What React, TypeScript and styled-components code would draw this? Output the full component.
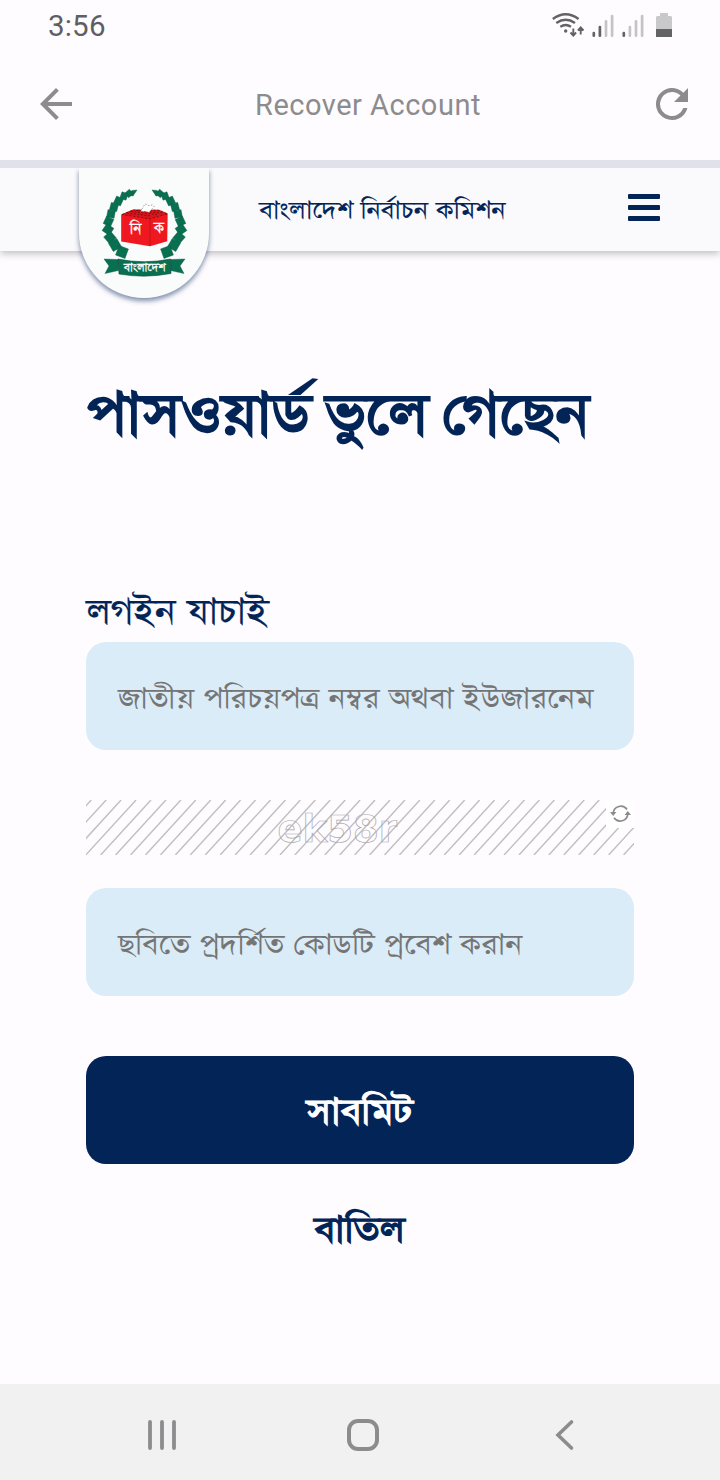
import React from 'react';
import styled, { createGlobalStyle } from 'styled-components';

const navy = '#022457';
const grey = '#8c8c8e';
const bangla = "'FreeSerif', 'Noto Serif Bengali', 'Noto Sans', serif";

const GlobalStyle = createGlobalStyle`
  * { box-sizing: border-box; }
  body { margin: 0; background: #fefcff; }
  svg { display: block; flex: none; }
`;

const Screen = styled.div`
  width: 720px;
  height: 1480px;
  display: flex;
  flex-direction: column;
  background: #fefcff;
  overflow: hidden;
`;

const StatusBar = styled.div`
  height: 50px;
  flex: none;
  padding: 0 47px 0 48px;
  display: flex;
  justify-content: space-between;
  align-items: center;
`;

const Clock = styled.span`
  font: 400 29.5px/36px Roboto, sans-serif;
  letter-spacing: 0.2px;
  color: #5f5f62;
  padding-top: 2px;
`;

const AppBar = styled.header`
  height: 118px;
  flex: none;
  padding: 0 24px 2px 32px;
  border-bottom: 8px solid #e1e1eb;
  display: flex;
  justify-content: space-between;
  align-items: center;
`;

const AppTitle = styled.h1`
  margin: 2px 0 0 8px;
  font: 400 29px/40px Roboto, sans-serif;
  letter-spacing: 0.5px;
  color: ${grey};
`;

// Bengali lettering set slightly expanded.
const Wide = styled.span<{ $by: number; $center?: boolean }>`
  display: inline-block;
  transform: scaleX(${(p) => p.$by});
  transform-origin: ${(p) => (p.$center ? 'center' : 'left')} center;
`;

const SiteHeader = styled.div`
  height: 83px;
  flex: none;
  display: flex;
  align-items: flex-start;
  padding: 0 60px 0 79px;
  background: #fafafc;
  box-shadow: 0 2px 8px rgba(0, 0, 0, 0.28);
  clip-path: inset(0 0 -70px 0);
`;

const Crest = styled.div`
  width: 130px;
  height: 130px;
  flex: none;
  background: #fafbfb;
  border-radius: 0 0 65px 65px;
  box-shadow: 0 3px 5px rgba(2, 36, 87, 0.5);
`;

const SiteName = styled.span`
  flex: 1;
  padding: 26px 0 0 50px;
  font: 400 28.5px/36px ${bangla};
  -webkit-text-stroke: 0.1px ${navy};
  color: ${navy};
  white-space: nowrap;
`;

const MenuIcon = styled.span`
  width: 32px;
  margin-top: 26px;
  display: flex;
  flex-direction: column;
  gap: 6px;
`;

const MenuBar = styled.i`
  height: 5px;
  border-radius: 1px;
  background: ${navy};
`;

const Main = styled.main`
  flex: 1;
  padding: 0 86px;
  display: flex;
  flex-direction: column;
`;

const Heading = styled.h2`
  margin: 116px 0 0;
  height: 100px;
  font: 400 70px/100px ${bangla};
  word-spacing: -4px;
  -webkit-text-stroke: 1.9px ${navy};
  color: ${navy};
  white-space: nowrap;
`;

const Label = styled.label`
  margin-top: 116px;
  height: 59px;
  font: 400 42px/60px ${bangla};
  -webkit-text-stroke: 0.2px ${navy};
  color: ${navy};
  white-space: nowrap;
`;

const Field = styled.div`
  height: 108px;
  flex: none;
  padding: 8px 32px 0;
  border-radius: 20px;
  background: #daecf8;
  display: flex;
  align-items: center;
  font: 400 34.4px/50px ${bangla};
  color: #757575;
  white-space: nowrap;
`;

const Captcha = styled.div`
  margin: 50px 0 33px;
  height: 55px;
  flex: none;
`;

const Submit = styled.button`
  margin-top: 60px;
  height: 108px;
  flex: none;
  padding: 6px 0 0;
  border: 0;
  border-radius: 20px;
  background: ${navy};
  color: #fff;
  font: 400 42px/60px ${bangla};
  -webkit-text-stroke: 1.2px #fff;
`;

const Cancel = styled.a`
  margin: 37px 2px 0 0;
  text-align: center;
  color: ${navy};
  font: 400 42px/60px ${bangla};
  -webkit-text-stroke: 1.2px ${navy};
`;

const NavBar = styled.nav`
  height: 96px;
  flex: none;
  padding: 6px 145px 0 147px;
  display: flex;
  justify-content: space-between;
  align-items: center;
  background: #f1f1f1;
`;

const HomeIcon = styled.svg`
  margin-right: 6px;
`;

// Leaves of one half of the wreath: centre x, centre y, size, rotation.
const leaves = [
  [50, 25.5, 6, 50], [45, 28, 6.5, 20], [39.5, 33, 7.5, 25], [35, 39, 7.5, 15], [32, 46, 7.5, 10],
  [29.5, 53.5, 8, 25], [29, 61.5, 8.5, 35], [31, 69.5, 9, 50], [36, 77, 9.5, 60], [43, 84, 10, 20],
];

const Emblem = () => (
  <svg width="130" height="130" viewBox="0 0 130 130">
    {[false, true].map((flip) => (
      <g key={String(flip)} fill="#087050" stroke="#0a5a44" strokeWidth="0.4" transform={flip ? 'translate(131 0) scale(-1 1)' : undefined}>
        <path d="M48 27l5-4.500 5-.500-4 6z" />
        {leaves.map(([x, y, s, a]) => (
          <rect key={y} x={x - s / 2} y={y - s / 2} width={s} height={s} transform={`rotate(${a} ${x} ${y})`} />
        ))}
        <path d="M25 91l14.500 .500v11l-13.500 3 4-7.500z" />
      </g>
    ))}
    <path d="M39 91q26 5.500 52.500 0l.500 14.500q-26.500 5-52 .500z" fill="#087050" stroke="#0a4a3a" strokeWidth="0.600" />
    <path d="M42.200 46.500L54 41.500l26 .300 8.700 3.700-.500 27.800-17.200 5-28.800-4.800z" fill="#f01820" />
    <path d="M43 46.500l11-4.500 26 .300 8.500 3.500-17.500 5z" fill="#d8161c" stroke="#5a0808" strokeWidth="0.600" strokeDasharray="2.500 1.500" />
    <path d="M48 45l24 3M52 43.500l26 3M57 42.500l26 2.500" stroke="#5a0808" strokeWidth="0.700" strokeDasharray="2 1.500" />
    <path d="M71 50.500v27.500" stroke="#b30f16" strokeWidth="0.700" />
    <path d="M61.500 43.500l4.500-7.500 3.500 1.500 4-.500 1.500 1.500-5 6-3-1z" fill="#fff" stroke="#444" strokeWidth="0.500" strokeDasharray="1.500 1.500" />
    <g fill="#fff" stroke="#fff" strokeWidth="0.300" fontFamily={bangla} textAnchor="middle">
      <text x="56.500" y="67" fontSize="18">নি</text>
      <text x="80" y="66" fontSize="18">ক</text>
      <text x="65.500" y="103.500" fontSize="14">বাংলাদেশ</text>
    </g>
  </svg>
);

const SignalBars = ({ x, strong }: { x: number; strong: number }) => (
  <g strokeWidth="2.700" strokeLinecap="round">
    {[33, 27, 21.300, 16].map((top, i) => (
      <path key={top} d={`M${x + i * 6.1} ${top}V35.700`} stroke={i < strong ? '#636366' : '#c4c3c6'} />
    ))}
  </g>
);

const StatusIcons = () => (
  <svg width="122" height="50" viewBox="551 0 122 50" fill="none">
    <g stroke="#636366">
      <path d="M552.800 19Q565.700 9.500 578.600 19M556.300 23Q565.700 16.500 575 23M560.300 26.700Q565.700 23.300 571 26.700" strokeWidth="2.300" />
      <circle cx="565.700" cy="31" r="1.700" fill="#636366" stroke="none" />
      <path d="M573.300 28.500v7M570.500 32.500l2.800 3 2.800-3M580.700 34.500v-7M577.900 30.500l2.800-3 2.800 3" strokeWidth="1.900" />
    </g>
    <SignalBars x={593.800} strong={2} />
    <SignalBars x={623.800} strong={1} />
    <path d="M660 13h8v3h3l1 1v12h-16V17l1-1h3z" fill="#c9c8cb" />
    <path d="M656 29h16v8h-16z" fill="#636366" />
  </svg>
);

const stripes = Array.from({ length: 41 }, (_, i) => 5.2 + i * 14.94);

const CaptchaImage = () => (
  <svg width="548" height="55" viewBox="0 0 548 55">
    <g stroke="#bfbec2" strokeWidth="1.400">
      {stripes.map((x) => <path key={x} d={`M${x} 0L${x - 50.3} 55`} />)}
    </g>
    <text x="191.500" y="42" fontFamily="'DejaVu Sans', sans-serif" fontWeight="700" fontSize="37" fill="none" stroke="#a9a8aa" strokeWidth="0.700">ek58r</text>
    <path d="M520 0h28v28h-28z" fill="#fff" />
    <g fill="none" stroke="#8b8b8b" strokeWidth="1.700">
      <path d="M527.200 13A7.600 7.600 0 0 1 541 9.500M541.800 14A7.600 7.600 0 0 1 528 17.800" />
      <path d="M524 12h6.400l-3.200 4zM538.600 15h6.400l-3.200-4z" fill="#8b8b8b" stroke="none" />
    </g>
  </svg>
);

export default function App() {
  return (
    <Screen>
      <GlobalStyle />
      <StatusBar>
        <Clock>3:56</Clock>
        <StatusIcons />
      </StatusBar>
      <AppBar>
        <svg width="48" height="48" viewBox="0 0 24 24" fill={grey}>
          <path d="M20 11H7.830l5.590-5.590L12 4l-8 8 8 8 1.410-1.410L7.830 13H20z" />
        </svg>
        <AppTitle>Recover Account</AppTitle>
        <svg width="48" height="48" viewBox="0 0 24 24" fill={grey}>
          <path d="M17.650 6.350A8 8 0 1 0 19.730 14h-2.080A6 6 0 1 1 12 6c1.660 0 3.140.690 4.220 1.780L13 11h7V4z" />
        </svg>
      </AppBar>
      <SiteHeader>
        <Crest><Emblem /></Crest>
        <SiteName><Wide $by={1.107}>বাংলাদেশ নির্বাচন কমিশন</Wide></SiteName>
        <MenuIcon><MenuBar /><MenuBar /><MenuBar /></MenuIcon>
      </SiteHeader>
      <Main>
        <Heading><Wide $by={1.073}>পাসওয়ার্ড ভুলে গেছেন</Wide></Heading>
        <Label><Wide $by={1.095}>লগইন যাচাই</Wide></Label>
        <Field><Wide $by={1.095}>জাতীয় পরিচয়পত্র নম্বর অথবা ইউজারনেম</Wide></Field>
        <Captcha><CaptchaImage /></Captcha>
        <Field><Wide $by={1.088}>ছবিতে প্রদর্শিত কোডটি প্রবেশ করান</Wide></Field>
        <Submit><Wide $by={1.12} $center>সাবমিট</Wide></Submit>
        <Cancel><Wide $by={1.12} $center>বাতিল</Wide></Cancel>
      </Main>
      <NavBar>
        <svg width="30" height="32" viewBox="0 0 30 32" stroke={grey} strokeWidth="3.800" strokeLinecap="round">
          <path d="M3 3v26M15 3v26M27 3v26" />
        </svg>
        <HomeIcon width="32" height="32" viewBox="0 0 32 32" fill="none" stroke={grey} strokeWidth="4">
          <rect x="2" y="2" width="28" height="28" rx="9" />
        </HomeIcon>
        <svg width="20" height="32" viewBox="0 0 20 32" fill="none" stroke={grey} strokeWidth="3.600" strokeLinecap="round">
          <path d="M16.500 3L3 16l13.500 13" />
        </svg>
      </NavBar>
    </Screen>
  );
}
